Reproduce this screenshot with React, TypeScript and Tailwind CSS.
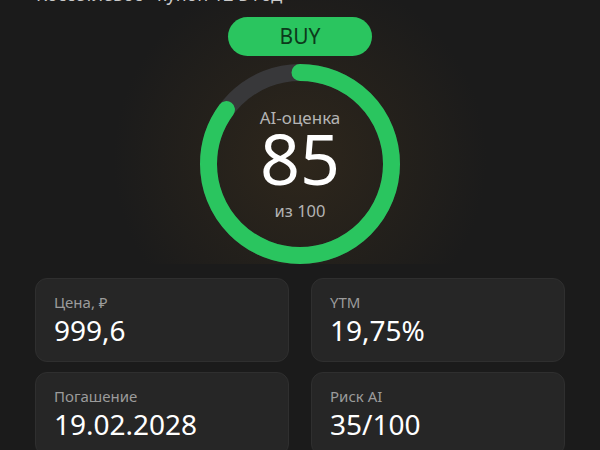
import React from "react";

const stats = [
  { label: "Цена, ₽", value: "999,6" },
  { label: "YTM", value: "19,75%" },
  { label: "Погашение", value: "19.02.2028" },
  { label: "Риск AI", value: "35/100" },
];

function ScoreRing({ score }: { score: number }) {
  const r = 91.5;
  const c = 2 * Math.PI * r;
  return (
    <div className="relative w-[200px] h-[200px]">
      <svg viewBox="0 0 200 200" className="w-full h-full -rotate-90">
        <circle cx="100" cy="100" r={r} fill="none" stroke="#38383a" strokeWidth="17" />
        <circle
          cx="100"
          cy="100"
          r={r}
          fill="none"
          stroke="#2ac55f"
          strokeWidth="17"
          strokeLinecap="round"
          strokeDasharray={`${(score / 100) * c} ${c}`}
        />
      </svg>
      <div className="absolute inset-0 flex flex-col items-center pt-[45px]">
        <span className="text-[17px] leading-none text-[#b4b4b4]">AI-оценка</span>
        <span className="text-[70px] leading-none text-white mt-[-3px]">{score}</span>
        <span className="text-[16.5px] leading-none text-[#b4b4b4] mt-[10px]">из 100</span>
      </div>
    </div>
  );
}

export default function App() {
  return (
    <div
      className="w-[600px] h-[450px] overflow-hidden bg-[#1b1b1b] flex flex-col items-center"
      style={{ fontFamily: '"Noto Sans", "Open Sans", sans-serif' }}
    >
      <div className="relative w-full flex flex-col items-center bg-[radial-gradient(circle_at_50%_60%,rgba(62,48,28,0.55)_0%,rgba(27,27,27,0)_55%)]">
        <div className="w-full px-[36px] text-[18px] leading-none text-[#c9c9c9] mt-[-15px]">
          Коссетлевос · купон 12 в год
        </div>
        <div className="mt-[14px] w-[144px] h-[39px] rounded-full bg-[#2ac55f] flex items-center justify-center">
          <span className="text-[21px] leading-none text-[#0c3a1b]">BUY</span>
        </div>
        <div className="mt-[8px]">
          <ScoreRing score={85} />
        </div>
      </div>

      <div className="w-full px-[35px] mt-[14px] grid grid-cols-2 gap-x-[22px] gap-y-[10px]">
        {stats.map((s) => (
          <div
            key={s.label}
            className="h-[84px] rounded-[12px] bg-[#262626] border border-[#2f2f2f] px-[18px] pt-[16px]"
          >
            <div className="text-[15px] leading-none text-[#9b9b9b]">{s.label}</div>
            <div className="text-[28px] leading-none text-white mt-[6px]">{s.value}</div>
          </div>
        ))}
      </div>
    </div>
  );
}
